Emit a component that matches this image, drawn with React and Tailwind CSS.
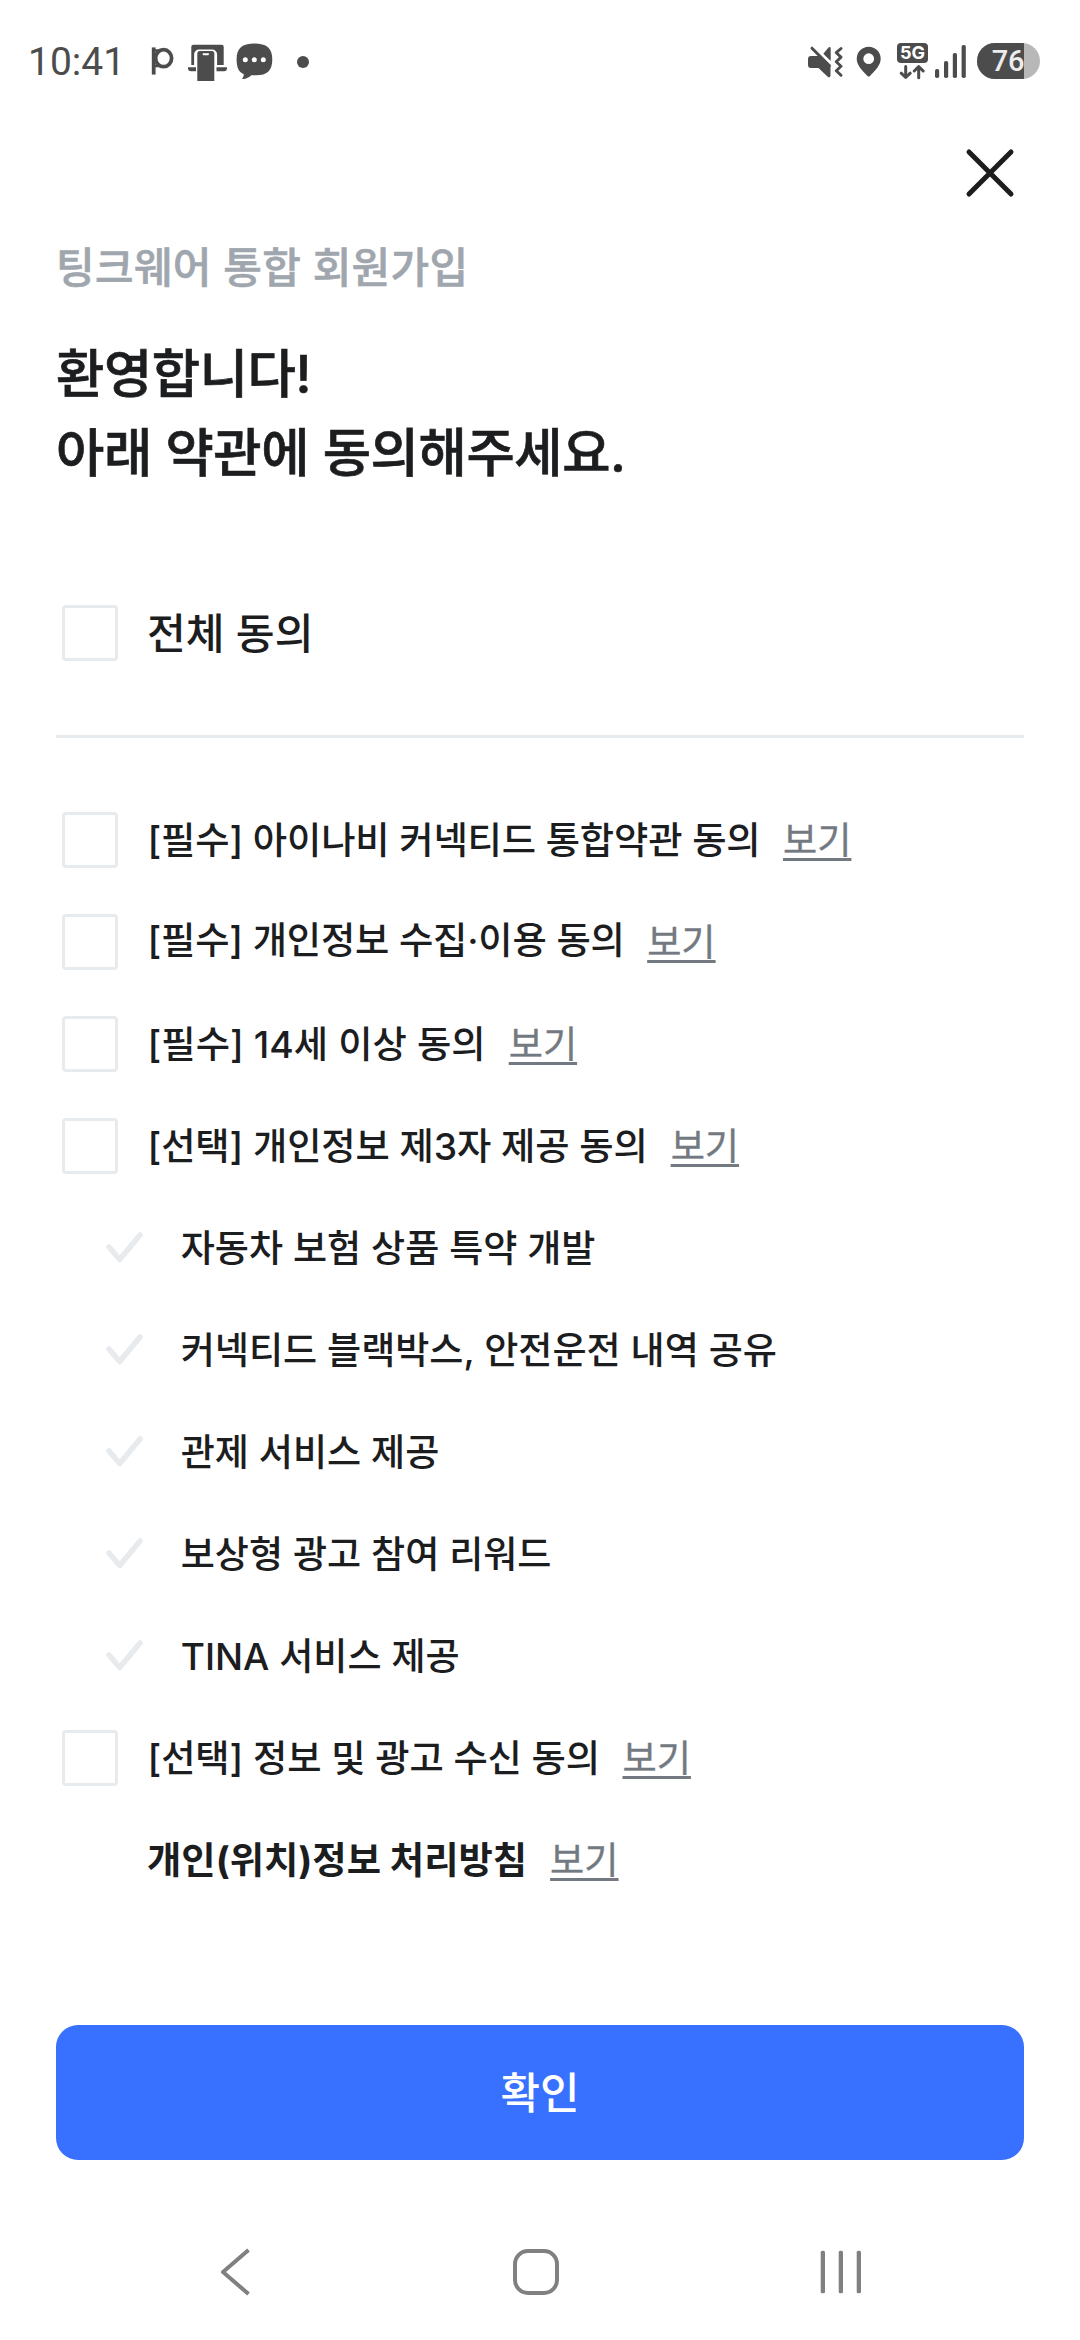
import React from "react";

const terms = [
  { label: "[필수] 아이나비 커넥티드 통합약관 동의", labelClass: "mt-[1px] tracking-[-0.15px]", linkClass: "ml-[22.5px]" },
  { label: "[필수] 개인정보 수집·이용 동의", labelClass: "-mt-[3px] tracking-[-0.18px]", linkClass: "ml-[22.5px]" },
  { label: "[필수] 14세 이상 동의", labelClass: "mt-[1px] tracking-[0.05px]", linkClass: "ml-[23px]" },
  { label: "[선택] 개인정보 제3자 제공 동의", labelClass: "mt-[1px] tracking-[-0.12px]", linkClass: "ml-[23px]" },
];

const thirdParty = [
  "자동차 보험 상품 특약 개발",
  "커넥티드 블랙박스, 안전운전 내역 공유",
  "관제 서비스 제공",
  "보상형 광고 참여 리워드",
  "TINA 서비스 제공",
];

function StatusBar() {
  return (
    <header className="flex h-[124px] items-center justify-between pl-[28px] pr-[40px] text-[#4c4c4c]">
      <div className="flex items-center">
        <span className="w-[123px] whitespace-nowrap font-['Roboto'] text-[39px] font-normal leading-[40px]">10:41</span>
        <svg width="24" height="40" viewBox="151 42 24 40" fill="none" stroke="currentColor" strokeWidth="3.8">
          <path d="M153.7 47.4V74.6" />
          <ellipse cx="163.600" cy="58.200" rx="8" ry="8.500" />
          <path d="M154 50.500h5M154 66h5" strokeWidth="2.500" />
        </svg>
        <svg className="ml-[12px]" width="41" height="40" viewBox="187 42 41 40" fill="currentColor">
          <path d="M193.3 44.7h28.4a2 2 0 0 1 2 2V65h-6.6V54.500a5 5 0 0 0-5-5h-13a5 5 0 0 0-5 5V65h-2.800V46.700a2 2 0 0 1 2-2z" />
          <path d="M188 67.200h8v4h-5a3 3 0 0 1-3-3zM216.500 67.200H227v1a3 3 0 0 1-3 3h-7.500z" />
          <path fillRule="evenodd" d="M199.800 51h12a2.500 2.500 0 0 1 2.500 2.500V81h-17V53.500a2.500 2.500 0 0 1 2.500-2.500zm2.900 2.200v1a1 1 0 0 0 1 1h4.200a1 1 0 0 0 1-1v-1z" />
        </svg>
        <svg className="ml-[8px]" width="38" height="40" viewBox="236 42 38 40" fill="currentColor">
          <path d="M254.300 43.500c12.500 0 18 4.500 18 16s-5.500 15.800-16 15.800h-5c-2 2-5 3.700-8.500 3.700-.8 0-.8-.6-.3-1.100 1-1 1.300-2.400 1.200-3.900-5-2-7.100-6.500-7.100-14.500 0-11.500 5.500-16 17.700-16z" />
          <g fill="#fff">
            <circle cx="245.300" cy="59.700" r="2.500" />
            <circle cx="254.300" cy="59.700" r="2.500" />
            <circle cx="263.300" cy="59.700" r="2.500" />
          </g>
        </svg>
        <span className="ml-[23px] size-[12px] rounded-full bg-[#4c4c4c]" />
      </div>

      <div className="flex items-center">
        <svg width="36" height="40" viewBox="807 42 36 40" fill="currentColor">
          <path d="M811 56h8.500l11 11v8.500c0 1.800-1.500 2.400-2.800 1.200L818.500 68H811a3 3 0 0 1-3-3v-6a3 3 0 0 1 3-3z" />
          <path d="M812 48.200L829.500 65.700" stroke="currentColor" strokeWidth="3" strokeLinecap="round" />
          <path d="M823.300 53.700l5-6c1-1.100 2.400-.7 2.400.9V61z" />
          <path d="M841 48.500l-4.700 4.200 4.700 4.400-4.700 4.600 4.700 4.500-4.700 4.500 4.700 4.600" fill="none" stroke="currentColor" strokeWidth="2.900" strokeLinecap="round" strokeLinejoin="round" />
        </svg>
        <svg className="ml-[13px]" width="26" height="40" viewBox="856 42 26 40" fill="currentColor">
          <path fillRule="evenodd" d="M868.700 46.700a12 12 0 0 1 12 12c0 7-6.500 12.500-10.500 17a2 2 0 0 1-3 0c-4-4.500-10.500-10-10.500-17a12 12 0 0 1 12-12zm0 6.600a5.400 5.400 0 1 0 0 10.800 5.400 5.400 0 0 0 0-10.800z" />
        </svg>
        <div className="ml-[15px] flex h-[40px] w-[31px] flex-col items-center pt-[1px]">
          <span className="flex h-[20px] w-[31px] items-center justify-center rounded-[4px] bg-[#4c4c4c] font-['Inter'] text-[18px] font-bold leading-none text-white">5G</span>
          <svg className="mt-[1px]" width="31" height="17" viewBox="897 63 31 17" fill="none" stroke="currentColor" strokeWidth="3" strokeLinecap="round" strokeLinejoin="round">
            <path d="M905.700 65.500V76M901.200 72.200l4.500 4.300 4.500-4.300M918.700 76.800V66M914.200 70l4.500-4.300 4.500 4.300" />
          </svg>
        </div>
        <svg className="ml-[7px]" width="31" height="40" viewBox="935 42 31 40" fill="currentColor">
          <rect x="935" y="69" width="4.200" height="9" rx="1.800" />
          <rect x="944" y="61" width="4.200" height="17" rx="1.800" />
          <rect x="952.800" y="53" width="4.200" height="25" rx="1.800" />
          <rect x="961.600" y="45" width="4.200" height="33" rx="1.800" />
        </svg>
        <div className="ml-[11px] flex h-[36px] w-[63px] -translate-y-[1px] overflow-hidden rounded-full bg-[#b8b8b8]">
          <span className="flex w-[47px] items-center justify-end bg-[#4c4c4c] font-['Roboto'] text-[29px] font-medium leading-none tracking-[-0.4px] text-[#ececec]">76</span>
        </div>
      </div>
    </header>
  );
}

function Checkbox() {
  return <span className="size-[56px] shrink-0 rounded-[4px] border-[3px] border-[#e8ebee] bg-white" />;
}

function ViewLink({ className = "ml-[22.5px]" }) {
  return (
    <a
      className={
        "mt-[2px] text-[37.2px] font-normal text-[#737980] underline decoration-[3px] underline-offset-[4px] [-webkit-text-stroke:0.35px_#737980] [text-decoration-skip-ink:none] " +
        className
      }
    >
      보기
    </a>
  );
}

function TermRow({ label, labelClass, linkClass }) {
  return (
    <div className="flex h-[56px] items-center pl-[6px]">
      <Checkbox />
      <span className={"ml-[29.5px] text-[37.3px] " + labelClass}>{label}</span>
      <ViewLink className={linkClass} />
    </div>
  );
}

function SubRow({ label }) {
  return (
    <div className="flex h-[56px] items-center pl-[49px]">
      <svg width="40" height="34" viewBox="0 0 40 34" fill="none" stroke="#e8ebee" strokeWidth="5.6" strokeLinecap="round" strokeLinejoin="round">
        <path d="M4 16L14.700 28.500L35 4" />
      </svg>
      <span className="ml-[35.700px] mt-[2px] text-[37.1px]">{label}</span>
    </div>
  );
}

export default function App() {
  return (
    <div className="flex h-[2340px] w-[1080px] flex-col overflow-hidden bg-white font-['Inter','Noto_Sans_CJK_KR',sans-serif] font-medium leading-[56px] whitespace-nowrap text-[#1c1d1f]">
      <StatusBar />
      <div className="flex h-[98px] items-center justify-end pr-[65px]">
        <svg width="50" height="50" viewBox="0 0 50 50" fill="none" stroke="#1c1d1f" strokeWidth="5" strokeLinecap="round">
          <path d="M4 4L46 46M46 4L4 46" />
        </svg>
      </div>

      <main className="flex flex-col px-[56px]">
        <p className="mt-[16px] text-[42px] leading-[60px] tracking-[0.3px] text-[#a0a6ad] [-webkit-text-stroke:0.6px_#a0a6ad]">
          팅크웨어 통합 회원가입
        </p>
        <h1 className="mt-[37px] text-[52.5px] leading-[79px] tracking-[-0.4px] [-webkit-text-stroke:0.7px_#1c1d1f]">
          환영합니다!
          <br />
          아래 약관에 동의해주세요.
        </h1>

        <div className="mt-[111px] flex h-[57px] items-center pl-[6px]">
          <Checkbox />
          <span className="ml-[29px] mt-[2px] text-[42.2px]">전체 동의</span>
        </div>
        <hr className="mt-[74px] h-[3px] border-0 bg-[#e8ebee]" />

        <div className="mt-[74px] flex flex-col gap-[46px]">
          {terms.map((t) => (
            <TermRow key={t.label} {...t} />
          ))}
          {thirdParty.map((t) => (
            <SubRow key={t} label={t} />
          ))}
          <TermRow label="[선택] 정보 및 광고 수신 동의" labelClass="mt-[1px] tracking-[-0.12px]" />
          <div className="flex h-[56px] items-center pl-[91px]">
            <span className="mt-[1px] text-[37.3px] font-bold">개인(위치)정보 처리방침</span>
            <ViewLink className="ml-[23px]" />
          </div>
        </div>

        <button className="mt-[137px] h-[135px] rounded-[22px] bg-[#3871ff] text-[43px] font-medium text-white">확인</button>
      </main>

      <nav className="mt-[68px] flex h-[88px] items-center justify-between pl-[219px] pr-[217px]">
        <svg width="32" height="50" viewBox="0 0 32 50" fill="none" stroke="#808080" strokeWidth="4" strokeLinejoin="round">
          <path d="M29.500 3L4 25L29.500 47" />
        </svg>
        <svg width="48" height="48" viewBox="0 0 48 48" fill="none" stroke="#808080" strokeWidth="4">
          <rect x="3" y="3" width="42" height="42" rx="13" />
        </svg>
        <svg width="43" height="44" viewBox="0 0 43 44" fill="#808080">
          <rect x="0.700" y="0.700" width="4.300" height="42.600" rx="1.500" />
          <rect x="18.700" y="0.700" width="4.300" height="42.600" rx="1.500" />
          <rect x="36.700" y="0.700" width="4.300" height="42.600" rx="1.500" />
        </svg>
      </nav>
    </div>
  );
}
